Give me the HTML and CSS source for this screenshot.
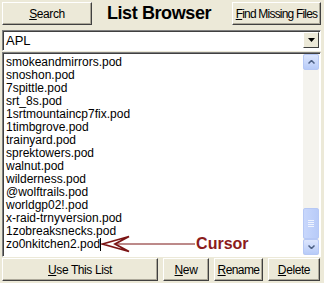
FILE: index.html
```html
<!DOCTYPE html>
<html>
    <head>
        <title>List Browser</title>
        <meta name="viewport" content="width=device-width, initial-scale=1.0">
        <link rel="stylesheet" href="styles.css">
    </head>
    <body>
        <div id="window">
            <div class="toprow">
                <button class="btn btn-search"><u>S</u>earch</button>
                <h1 class="title">List Browser</h1>
                <button class="btn btn-find"><u>F</u>ind Missing Files</button>
            </div>
            <div class="combo">
                <span class="combo-text">APL</span>
                <span class="combo-arrow">
                    <svg width="7" height="4" viewBox="0 0 7 4"><path d="M0 0h7L3.5 4z" fill="#000"/></svg>
                </span>
            </div>
            <div class="listbox">
                <ul class="items">
                    <li>smokeandmirrors.pod</li>
                    <li>snoshon.pod</li>
                    <li>7spittle.pod</li>
                    <li>srt_8s.pod</li>
                    <li>1srtmountaincp7fix.pod</li>
                    <li>1timbgrove.pod</li>
                    <li>trainyard.pod</li>
                    <li>sprektowers.pod</li>
                    <li>walnut.pod</li>
                    <li>wilderness.pod</li>
                    <li>@wolftrails.pod</li>
                    <li>worldgp02!.pod</li>
                    <li>x-raid-trnyversion.pod</li>
                    <li>1zobreaksnecks.pod</li>
                    <li>zo0nkitchen2.pod<span class="caret">
                        <span class="annot">
                            <svg class="arrow" width="94" height="18" viewBox="0 0 94 18">
                                <path d="M1.5 9L28 1.5L14 9L28 16.5Z" fill="none" stroke="#7b1414" stroke-width="1.8" stroke-linejoin="miter"/>
                                <path d="M14 9H94" stroke="#7b1414" stroke-width="1"/>
                            </svg>
                            <span class="annot-text">Cursor</span>
                        </span>
                    </span></li>
                </ul>
                <div class="scrollbar">
                    <div class="sb-btn">
                        <svg width="7" height="4" viewBox="0 0 7 4"><path d="M0.5 3.5L3.5 0.5L6.5 3.5" fill="none" stroke="#4d6185" stroke-width="1.5"/></svg>
                    </div>
                    <div class="sb-track"></div>
                    <div class="sb-thumb">
                        <span></span><span></span><span></span><span></span>
                    </div>
                    <div class="sb-btn">
                        <svg width="7" height="4" viewBox="0 0 7 4"><path d="M0.5 0.5L3.5 3.5L6.5 0.5" fill="none" stroke="#4d6185" stroke-width="1.5"/></svg>
                    </div>
                </div>
            </div>
            <div class="bottomrow">
                <button class="btn btn-use"><u>U</u>se This List</button>
                <button class="btn btn-new"><u>N</u>ew</button>
                <button class="btn btn-rename"><u>R</u>ename</button>
                <button class="btn btn-delete"><u>D</u>elete</button>
            </div>
        </div>
    </body>
</html>
```
FILE: styles.css
```css
body {
    margin: 0;
    background-color: #ece9d8;
    font-family: "Liberation Sans", Arial, sans-serif;
    font-size: 12px;
    color: #000;
}
#window {
    width: 324px;
    height: 283px;
    padding: 2px 3px 2px 2px;
    box-sizing: border-box;
    display: flex;
    flex-direction: column;
}
.btn {
    font-family: "Liberation Sans", Arial, sans-serif;
    font-size: 12px;
    letter-spacing: -0.4px;
    white-space: nowrap;
    color: #000;
    background-color: #ece9d8;
    border: 1px solid;
    border-color: #fff #404040 #404040 #fff;
    box-shadow: inset -1px -1px 0 #aca899;
    height: 23px;
    padding: 0;
    margin: 0;
}
.toprow {
    display: flex;
    align-items: center;
    height: 23px;
}
.btn-search {
    width: 90px;
}
.btn-find {
    width: 89px;
    letter-spacing: -0.8px;
}
.title {
    flex: 1;
    margin: 0;
    text-align: center;
    font-size: 18px;
    font-weight: bold;
    letter-spacing: -0.4px;
    padding-right: 6px;
}
.combo {
    margin-top: 5px;
    height: 21px;
    box-sizing: border-box;
    border: 1px solid;
    border-color: #808080 #fff #fff #808080;
    box-shadow: inset 1px 1px 0 #404040;
    background-color: #fff;
    display: flex;
    align-items: center;
}
.combo-text {
    flex: 1;
    padding-left: 3px;
    font-size: 13px;
}
.combo-arrow {
    width: 16px;
    height: 16px;
    margin-right: 1px;
    background-color: #ece9d8;
    border: 1px solid;
    border-color: #fff #404040 #404040 #fff;
    box-sizing: border-box;
    display: flex;
    align-items: center;
    justify-content: center;
}
.listbox {
    margin-top: 1px;
    height: 206px;
    box-sizing: border-box;
    border: 1px solid;
    border-color: #808080 #fff #fff #808080;
    box-shadow: inset 1px 1px 0 #404040;
    background-color: #fff;
    display: flex;
}
.items {
    list-style: none;
    margin: 0;
    padding: 3px 0 0 3px;
    flex: 1;
}
.items li {
    height: 13px;
    line-height: 13px;
    white-space: nowrap;
}
.caret {
    position: relative;
    display: inline-block;
    width: 1px;
    height: 13px;
    background-color: #000;
    vertical-align: top;
}
.annot {
    position: absolute;
    left: 1px;
    top: -3px;
    display: flex;
    align-items: center;
}
.annot-text {
    color: #8b1c1c;
    font-weight: bold;
    font-size: 16px;
    margin-left: 1px;
    line-height: 18px;
}
.scrollbar {
    width: 16px;
    margin: 1px 1px 1px 0;
    background-color: #f4f3ee;
    display: flex;
    flex-direction: column;
}
.sb-btn {
    height: 16px;
    box-sizing: border-box;
    border: 1px solid #b6c8f5;
    border-radius: 2px;
    background: linear-gradient(#dde6fd, #b7cbf8);
    display: flex;
    align-items: center;
    justify-content: center;
}
.sb-track {
    flex: 1;
}
.sb-thumb {
    height: 31px;
    box-sizing: border-box;
    border: 1px solid #b6c8f5;
    border-radius: 2px;
    background: linear-gradient(90deg, #c8d7fc, #b8cbf8);
    display: flex;
    flex-direction: column;
    align-items: center;
    justify-content: center;
    gap: 1px;
}
.sb-thumb span {
    width: 6px;
    height: 1px;
    background-color: #eef3fe;
}
.bottomrow {
    display: flex;
    gap: 5px;
    margin-top: 1px;
}
.btn-use {
    width: 156px;
}
.btn-new {
    width: 46px;
}
.btn-rename {
    width: 49px;
    letter-spacing: -0.6px;
}
.btn-delete {
    width: 52px;
}
```
